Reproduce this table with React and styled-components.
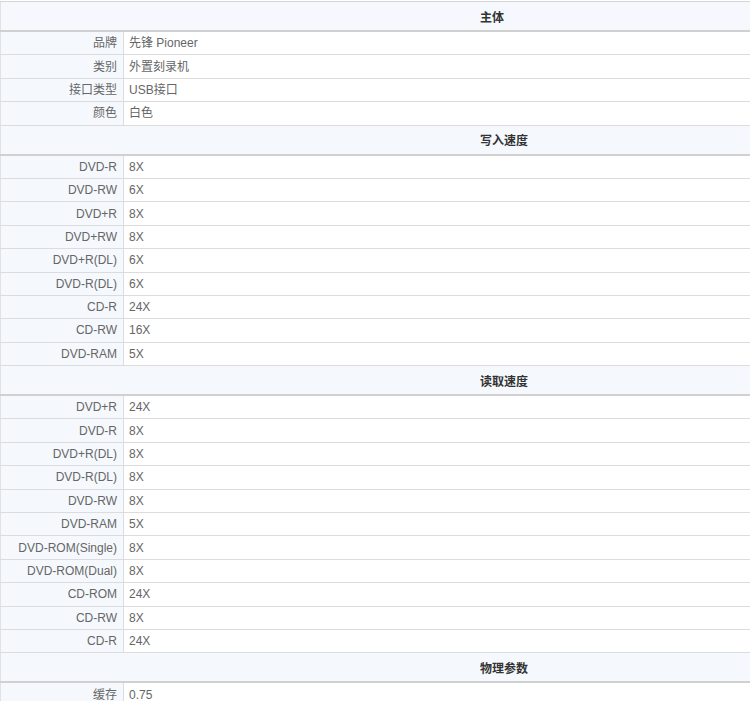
import React from "react";
import styled, { createGlobalStyle } from "styled-components";

const Global = createGlobalStyle`
  html, body { margin: 0; padding: 0; background: #fff; overflow: hidden; }
  body { font-family: "Liberation Sans", Arial, "Noto Sans CJK SC", sans-serif; font-size: 12px; }
`;

const Page = styled.div`
  padding-top: 1px;
  width: 100%;
`;

const Table = styled.table`
  width: 100%;
  border-collapse: collapse;
  table-layout: fixed;
  border-left: 1px solid #e2e2e2;
`;

const HeadCell = styled.th`
  height: 28px;
  padding: 0 0 0 479px;
  background: #f5f9fd;
  border-bottom: 2px solid #d0d0d0;
  border-top: ${(p) => (p.$first ? "1px solid #d6d6d6" : "0")};
  color: #333;
  font-weight: bold;
  font-size: 12px;
  text-align: left;
  font-family: "Noto Sans CJK SC", "Liberation Sans", sans-serif;
`;

const LabelCell = styled.td`
  height: 22.4px;
  padding: 0 6px 0 0;
  background: #f5f9fd;
  border-bottom: 1px solid #dcdcdc;
  border-right: 1px solid #dcdcdc;
  color: #666;
  text-align: right;
  white-space: nowrap;
  line-height: 16px;
`;

const ValueCell = styled.td`
  height: 22.4px;
  padding: 0 0 0 5px;
  background: #fff;
  border-bottom: 1px solid #dcdcdc;
  color: #666;
  text-align: left;
  white-space: nowrap;
  line-height: 16px;
`;

const sections = [
  {
    title: "主体",
    rows: [
      ["品牌", "先锋 Pioneer"],
      ["类别", "外置刻录机"],
      ["接口类型", "USB接口"],
      ["颜色", "白色"],
    ],
  },
  {
    title: "写入速度",
    rows: [
      ["DVD-R", "8X"],
      ["DVD-RW", "6X"],
      ["DVD+R", "8X"],
      ["DVD+RW", "8X"],
      ["DVD+R(DL)", "6X"],
      ["DVD-R(DL)", "6X"],
      ["CD-R", "24X"],
      ["CD-RW", "16X"],
      ["DVD-RAM", "5X"],
    ],
  },
  {
    title: "读取速度",
    rows: [
      ["DVD+R", "24X"],
      ["DVD-R", "8X"],
      ["DVD+R(DL)", "8X"],
      ["DVD-R(DL)", "8X"],
      ["DVD-RW", "8X"],
      ["DVD-RAM", "5X"],
      ["DVD-ROM(Single)", "8X"],
      ["DVD-ROM(Dual)", "8X"],
      ["CD-ROM", "24X"],
      ["CD-RW", "8X"],
      ["CD-R", "24X"],
    ],
  },
  {
    title: "物理参数",
    rows: [["缓存", "0.75"]],
  },
];

export default function App() {
  return (
    <Page>
      <Global />
      <Table>
        <colgroup>
          <col style={{ width: "123px" }} />
          <col />
        </colgroup>
        <tbody>
          {sections.map((s, si) => (
            <React.Fragment key={s.title}>
              <tr>
                <HeadCell colSpan={2} $first={si === 0}>
                  {s.title}
                </HeadCell>
              </tr>
              {s.rows.map(([k, v], i) => (
                <tr key={s.title + i}>
                  <LabelCell>{k}</LabelCell>
                  <ValueCell>{v}</ValueCell>
                </tr>
              ))}
            </React.Fragment>
          ))}
        </tbody>
      </Table>
    </Page>
  );
}
